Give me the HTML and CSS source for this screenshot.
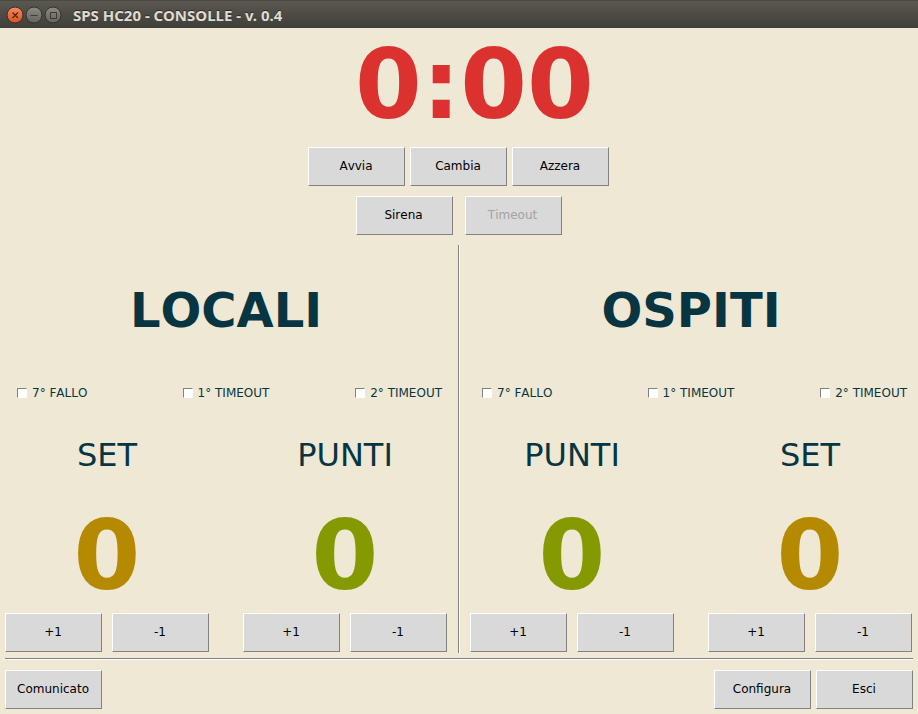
FILE: index.html
```html
<!DOCTYPE html>
<html lang="it">
<head>
<meta charset="utf-8">
<title>SPS HC20 - CONSOLLE - v. 0.4</title>
<link rel="stylesheet" href="styles.css">
</head>
<body>
<header class="titlebar">
  <div class="window-controls">
    <button class="control" type="button" aria-label="Chiudi">
      <svg viewBox="0 0 18 18" width="18" height="18"><defs><linearGradient id="orange" x1="0" y1="0" x2="0" y2="1"><stop offset="0" stop-color="#f58a66"/><stop offset="1" stop-color="#e2501b"/></linearGradient></defs><circle cx="9" cy="9" r="8" fill="url(#orange)" stroke="#33322d"/><path d="M6.500 6.500l5.500 5.500M12 6.500l-5.500 5.500" stroke="#4a2a1c" stroke-width="1.300" fill="none"/></svg>
    </button>
    <button class="control" type="button" aria-label="Riduci">
      <svg viewBox="0 0 18 18" width="18" height="18"><defs><linearGradient id="gray" x1="0" y1="0" x2="0" y2="1"><stop offset="0" stop-color="#8b8a83"/><stop offset="1" stop-color="#64635d"/></linearGradient></defs><circle cx="9" cy="9" r="8" fill="url(#gray)" stroke="#33322d"/><path d="M5.500 9.500h7" stroke="#3a3934" fill="none"/></svg>
    </button>
    <button class="control" type="button" aria-label="Ingrandisci">
      <svg viewBox="0 0 18 18" width="18" height="18"><circle cx="9" cy="9" r="8" fill="url(#gray)" stroke="#33322d"/><path d="M6.500 6.500h6v6h-6z" stroke="#3a3934" fill="none"/></svg>
    </button>
  </div>
  <h1 class="window-title">SPS HC20 - CONSOLLE - v. 0.4</h1>
</header>
<main class="console">
  <section class="clock">
    <div class="time">0:00</div>
    <div class="clock-row">
      <button class="button" type="button">Avvia</button>
      <button class="button" type="button">Cambia</button>
      <button class="button" type="button">Azzera</button>
    </div>
    <div class="clock-row signals">
      <button class="button" type="button">Sirena</button>
      <button class="button" type="button" disabled>Timeout</button>
    </div>
  </section>
  <div class="teams">
    <section class="team">
      <h2 class="team-name">LOCALI</h2>
      <div class="flags">
        <label class="flag"><input type="checkbox">7° FALLO</label>
        <label class="flag"><input type="checkbox">1° TIMEOUT</label>
        <label class="flag"><input type="checkbox">2° TIMEOUT</label>
      </div>
      <div class="scores">
        <div class="score">
          <h3 class="score-label">SET</h3>
          <div class="value set">0</div>
          <div class="steps"><button class="button" type="button">+1</button><button class="button" type="button">-1</button></div>
        </div>
        <div class="score">
          <h3 class="score-label">PUNTI</h3>
          <div class="value points">0</div>
          <div class="steps"><button class="button" type="button">+1</button><button class="button" type="button">-1</button></div>
        </div>
      </div>
    </section>
    <div class="divider"></div>
    <section class="team">
      <h2 class="team-name">OSPITI</h2>
      <div class="flags">
        <label class="flag"><input type="checkbox">7° FALLO</label>
        <label class="flag"><input type="checkbox">1° TIMEOUT</label>
        <label class="flag"><input type="checkbox">2° TIMEOUT</label>
      </div>
      <div class="scores">
        <div class="score">
          <h3 class="score-label">PUNTI</h3>
          <div class="value points">0</div>
          <div class="steps"><button class="button" type="button">+1</button><button class="button" type="button">-1</button></div>
        </div>
        <div class="score">
          <h3 class="score-label">SET</h3>
          <div class="value set">0</div>
          <div class="steps"><button class="button" type="button">+1</button><button class="button" type="button">-1</button></div>
        </div>
      </div>
    </section>
  </div>
  <div class="rule"></div>
  <footer class="actions">
    <button class="button" type="button">Comunicato</button>
    <div class="actions-end">
      <button class="button" type="button">Configura</button>
      <button class="button" type="button">Esci</button>
    </div>
  </footer>
</main>
</body>
</html>
```

FILE: styles.css
```css
* {
  box-sizing: border-box;
}

body {
  margin: 0;
  min-height: 100vh;
  display: flex;
  flex-direction: column;
  background: #eee8d5;
  color: #073642;
  font: 12px/16px "DejaVu Sans", sans-serif;
  font-kerning: none;
}

h1, h2, h3 {
  margin: 0;
}

.titlebar {
  display: flex;
  align-items: center;
  gap: 11px;
  height: 28px;
  padding: 0 6px;
  background: linear-gradient(#5a5850, #3f3e39);
  border-top: 1px solid #4a4943;
}

.window-controls {
  display: flex;
  gap: 1px;
}

.control {
  display: block;
  width: 18px;
  height: 18px;
  padding: 0;
  border: 0;
  background: none;
}

.control svg {
  display: block;
}

.window-title {
  color: #dfdbd2;
  font: bold 15px/20px "Noto Sans", sans-serif;
  text-shadow: 0 -1px 0 #2d2c28;
}

.console {
  flex: 1;
  display: flex;
  flex-direction: column;
  padding: 1px 5px 5px;
}

.clock {
  display: flex;
  flex-direction: column;
  align-items: center;
  gap: 10px;
  padding-right: 1px;
}

.time {
  margin-bottom: -4px;
  padding-left: 32px;
  color: #dc322f;
  font-size: 96px;
  font-weight: bold;
  line-height: 112px;
}

.clock-row {
  display: flex;
  gap: 5px;
}

.signals {
  gap: 12px;
}

.button {
  width: 97px;
  height: 39px;
  padding: 0 1px 2px 0;
  border: 1px solid;
  border-color: #fff #828282 #828282 #fff;
  background: #d9d9d9;
  color: #000;
  font: inherit;
  font-kerning: none;
}

.button:disabled {
  color: #a3a3a3;
}

.teams {
  flex: 1;
  display: grid;
  grid-template-columns: 1fr auto 1fr;
  margin-top: 10px;
  padding-right: 1px;
}

.divider {
  width: 2px;
  margin: 0 10px 0 11px;
  background: linear-gradient(90deg, #828282 50%, #fff 50%);
}

.team {
  display: flex;
  flex-direction: column;
  padding-bottom: 1px;
}

.team-name {
  flex: 1;
  display: flex;
  align-items: center;
  justify-content: center;
  font-size: 48px;
  line-height: 56px;
}

.flags {
  display: grid;
  grid-template-columns: 1fr auto 1fr;
  padding-top: 10px;
}

.flag {
  display: flex;
  align-items: center;
  gap: 5px;
}

.flag:first-child {
  margin-left: 12px;
}

.flag:last-child {
  justify-self: end;
  margin-right: 5px;
}

.flag input {
  appearance: none;
  width: 10px;
  height: 10px;
  margin: 0;
  border: 1px solid;
  border-color: #828282 #fff #fff #828282;
  background: #fff;
}

.scores {
  display: flex;
  justify-content: space-between;
  margin-top: 35px;
}

.score {
  display: flex;
  flex-direction: column;
  align-items: center;
}

.score-label {
  font-size: 32px;
  font-weight: normal;
  line-height: 38px;
}

.value {
  margin: 26px 0 1px;
  font-size: 96px;
  font-weight: bold;
  line-height: 112px;
}

.set {
  color: #b58900;
}

.points {
  color: #859900;
}

.steps {
  display: flex;
  gap: 10px;
}

.rule {
  height: 2px;
  margin: 5px 0 10px;
  background: linear-gradient(#828282 50%, #fff 50%);
}

.actions {
  display: flex;
  justify-content: space-between;
}

.actions-end {
  display: flex;
  gap: 5px;
}
```
